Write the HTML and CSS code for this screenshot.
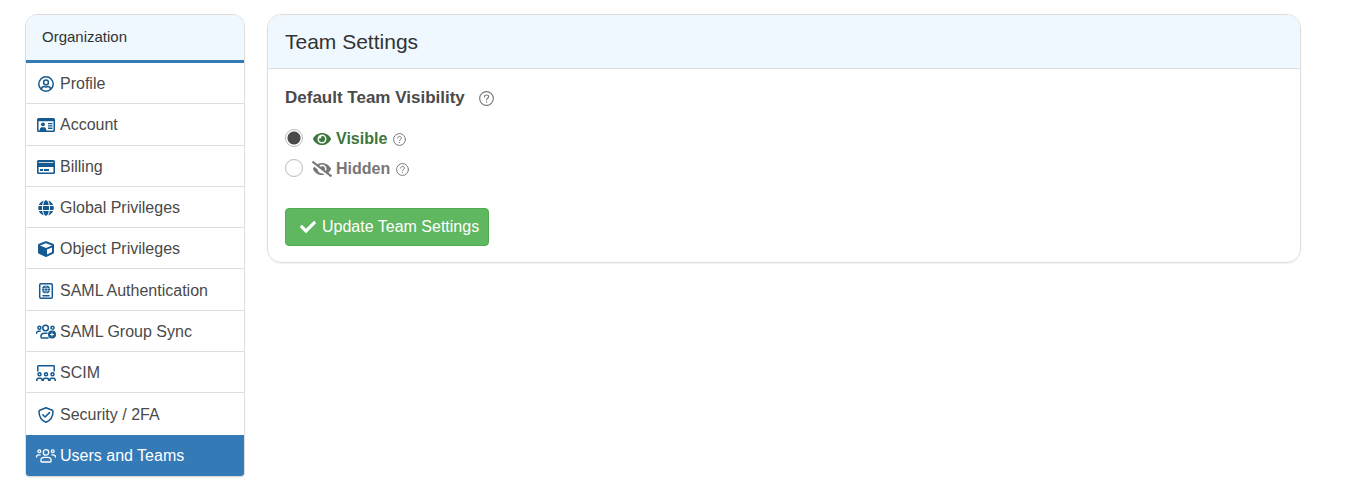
FILE: index.html
```
<!DOCTYPE html>
<html lang="en">
<head>
  <meta charset="UTF-8">
  <meta name="viewport" content="width=device-width, initial-scale=1.0">
  <title>Team Settings</title>
  <link rel="stylesheet" href="styles.css">
</head>
<body>

<div class="page">
  <nav class="sidebar" aria-labelledby="sidebar-title">
    <h2 class="sidebar-title" id="sidebar-title">Organization</h2>
    <ul class="menu">
      <li>
        <a href="#profile">
          <svg class="icon line" viewBox="0 0 20 16"><circle cx="10" cy="8" r="7.2"/><circle cx="10" cy="6.4" r="2.4"/><path d="M5.3 13.2c.4-1.9 1.6-2.6 2.9-2.6.6 0 1 .3 1.8.3s1.2-.3 1.8-.3c1.3 0 2.5.7 2.9 2.6"/></svg>
          Profile
        </a>
      </li>
      <li>
        <a href="#account">
          <svg class="icon" viewBox="0 0 20 16"><path fill-rule="evenodd" d="M2.6 1h14.8A1.6 1.6 0 0 1 19 2.600v10.800a1.600 1.600 0 0 1-1.600 1.600H2.600A1.600 1.600 0 0 1 1 13.400V2.600A1.600 1.600 0 0 1 2.600 1zM2.500 4.200v9.300h15V4.200z"/><circle cx="7" cy="7.300" r="1.900"/><path d="M3.500 14c0-2.500 1-3.800 2.400-3.800h2.200c1.400 0 2.400 1.300 2.400 3.800zM12 6h4.500v1.300H12zm0 2.300h4.500v1.300H12zm0 2.300h4.500v1.300H12z"/></svg>
          Account
        </a>
      </li>
      <li>
        <a href="#billing">
          <svg class="icon" viewBox="0 0 20 16"><path fill-rule="evenodd" d="M2.6 1h14.8A1.6 1.6 0 0 1 19 2.600v10.800a1.600 1.600 0 0 1-1.600 1.600H2.600A1.600 1.600 0 0 1 1 13.400V2.600A1.600 1.600 0 0 1 2.600 1zM2.600 3v.7h14.800V3zm0 5v5.500h14.800V8z"/><path d="M4 10h3v2H4zm4 0h5v2H8z"/></svg>
          Billing
        </a>
      </li>
      <li>
        <a href="#global-privileges">
          <svg class="icon" viewBox="-72 0 640 512"><path d="M336.500 160C322 70.700 287.800 8 248 8s-74 62.700-88.500 152h177zM152 256c0 22.200 1.200 43.500 3.300 64h185.300c2.100-20.500 3.300-41.800 3.300-64s-1.200-43.500-3.300-64H155.300c-2.100 20.500-3.300 41.800-3.300 64zm324.700-96c-28.600-67.900-86.500-120.400-158-141.600 24.400 33.800 41.200 84.700 50 141.600h108zM177.200 18.400C105.800 39.600 47.800 92.100 19.300 160h108c8.700-56.900 25.500-107.800 49.900-141.600zM487.400 192H372.700c2.100 21 3.300 42.500 3.300 64s-1.200 43-3.300 64h114.600c5.500-20.500 8.600-41.800 8.600-64s-3.100-43.500-8.500-64zM120 256c0-21.500 1.200-43 3.300-64H8.600C3.200 212.500 0 233.800 0 256s3.200 43.500 8.600 64h114.600c-2-21-3.200-42.500-3.200-64zm39.500 96c14.500 89.300 48.700 152 88.500 152s74-62.700 88.500-152h-177zm159.300 141.600c71.400-21.200 129.400-73.700 158-141.600h-108c-8.800 56.900-25.600 107.800-50 141.600zM19.300 352c28.600 67.900 86.500 120.400 158 141.600-24.400-33.800-41.200-84.700-50-141.600h-108z"/></svg>
          Global Privileges
        </a>
      </li>
      <li>
        <a href="#object-privileges">
          <svg class="icon" viewBox="0 0 20 16"><path fill-rule="evenodd" d="M9.400.3a1.700 1.700 0 0 1 1.200 0l6.400 2.400c.6.200 1 .8 1 1.400v7.300c0 .6-.3 1.100-.9 1.400l-6.400 3a1.600 1.600 0 0 1-1.400 0l-6.400-3a1.500 1.500 0 0 1-.9-1.400V4.100c0-.6.4-1.200 1-1.400zM10 2.200 4 4.400v.1L10 7l6-2.500v-.1zM11 13.500l5-2.400V6.600l-5 2z"/></svg>
          Object Privileges
        </a>
      </li>
      <li>
        <a href="#saml-authentication">
          <svg class="icon line" viewBox="0 0 20 16"><rect x="3.700" y=".8" width="12.600" height="14.400" rx="1.200"/><circle class="solid" cx="10" cy="6.600" r="4"/><path class="cut thin" d="M6 5.500h8M6 7.700h8M10 2.600c-2 2.400-2 5.600 0 8M10 2.600c2 2.400 2 5.600 0 8"/><path d="M7 12.800h6"/></svg>
          SAML Authentication
        </a>
      </li>
      <li>
        <a href="#saml-group-sync">
          <svg class="icon line" viewBox="0 0 20 16"><circle cx="3.400" cy="3.800" r="1.500"/><circle cx="9.600" cy="4" r="2.800"/><path d="M15.300 4.700a1.500 1.500 0 1 1 1.300.6M.6 9.300c0-1.300.7-2 1.900-2h1.700M11 9.200H8.300C6.200 9.200 5 10.300 5 12.100v1c0 .5.300.9.900.9H12"/><circle class="solid" cx="16" cy="10.500" r="4"/><path class="cut" d="M16 9v3M14.500 10.500h3"/></svg>
          SAML Group Sync
        </a>
      </li>
      <li>
        <a href="#scim">
          <svg class="icon line" viewBox="0 0 20 16"><path d="M1.800 6V1.500c0-.5.3-.8.8-.8h14.800c.5 0 .8.3.8.800V6"/><circle cx="3.500" cy="9.300" r="1.500"/><circle cx="10" cy="9.300" r="1.500"/><circle cx="16.500" cy="9.300" r="1.500"/><path d="M.7 15.700c0-1.600.8-2.500 2-2.500h1.600c1.200 0 2 .9 2 2.500M7.200 15.700c0-1.600.8-2.500 2-2.500h1.600c1.200 0 2 .9 2 2.500M13.700 15.700c0-1.600.8-2.500 2-2.500h1.600c1.200 0 2 .9 2 2.500"/></svg>
          SCIM
        </a>
      </li>
      <li>
        <a href="#security">
          <svg class="icon line" viewBox="0 0 20 16"><path d="M10 .8l6.200 2.500c.5.200.8.600.8 1.100 0 5-2.300 8.900-7 10.900-4.700-2-7-5.900-7-10.900 0-.5.300-.9.800-1.100z"/><path d="M6.800 7.700l2.300 2.300 4.400-4.400"/></svg>
          Security / 2FA
        </a>
      </li>
      <li>
        <a href="#users-and-teams" class="active" aria-current="page">
          <svg class="icon line" viewBox="0 0 20 16"><circle cx="3.300" cy="3.300" r="1.400"/><circle cx="16.700" cy="3.300" r="1.400"/><circle cx="10" cy="4.400" r="2.700"/><path d="M.6 9c0-1.400.8-2.100 2-2.100h1.600M19.400 9c0-1.400-.8-2.100-2-2.100h-1.600"/><path d="M8.200 9.400h3.600c2 0 3.300 1.200 3.300 3v.8c0 .5-.3.800-.8.800H5.700c-.5 0-.8-.3-.8-.8v-.8c0-1.800 1.300-3 3.300-3z"/></svg>
          Users and Teams
        </a>
      </li>
    </ul>
  </nav>

  <main class="panel">
    <h1 class="panel-title">Team Settings</h1>
    <form class="panel-body">
      <fieldset class="visibility">
        <legend>
          Default Team Visibility
          <svg class="help help-large" viewBox="0 0 16 16"><circle cx="8" cy="8" r="7.300"/><path d="M5.800 6.300c0-1.300.9-2.100 2.200-2.100s2.300.8 2.300 2c0 1.600-2.200 1.600-2.200 3.200"/><path d="M8.100 11.500v.4"/></svg>
        </legend>
        <div class="option option-visible">
          <input type="radio" name="visibility" id="visible" checked>
          <label for="visible">
            <svg class="eye" viewBox="-32 0 640 512"><path d="M572.520 241.400C518.290 135.590 410.930 64 288 64S57.680 135.640 3.480 241.410a32.350 32.350 0 0 0 0 29.190C57.710 376.410 165.070 448 288 448s230.320-71.640 284.520-177.410a32.350 32.350 0 0 0 0-29.190zM288 400a144 144 0 1 1 144-144 143.930 143.930 0 0 1-144 144zm0-240a95.310 95.310 0 0 0-25.310 3.790 47.850 47.850 0 0 1-66.900 66.900A95.780 95.780 0 1 0 288 160z"/></svg>
            Visible
          </label>
          <svg class="help" viewBox="0 0 16 16"><circle cx="8" cy="8" r="7.300"/><path d="M5.800 6.300c0-1.300.9-2.100 2.200-2.100s2.300.8 2.300 2c0 1.600-2.200 1.600-2.200 3.200"/><path d="M8.100 11.500v.4"/></svg>
        </div>
        <div class="option option-hidden">
          <input type="radio" name="visibility" id="hidden">
          <label for="hidden">
            <svg class="eye" viewBox="0 0 640 512"><path d="M320 400c-75.850 0-137.250-58.710-142.900-133.110L72.200 185.820c-13.790 17.300-26.480 35.590-36.720 55.590a32.350 32.350 0 0 0 0 29.190C89.710 376.410 197.070 448 320 448c26.910 0 52.870-4 77.890-10.460L346 397.390a144.130 144.130 0 0 1-26 2.610zm313.820 58.100l-110.550-85.440a331.250 331.250 0 0 0 81.250-102.070 32.350 32.350 0 0 0 0-29.190C550.290 135.590 442.930 64 320 64a308.150 308.150 0 0 0-147.320 37.700L45.460 3.370A16 16 0 0 0 23 6.180L3.370 31.450A16 16 0 0 0 6.180 53.900l588.360 454.730a16 16 0 0 0 22.460-2.810l19.640-25.270a16 16 0 0 0-2.820-22.450zm-183.720-142l-39.300-30.380A94.750 94.750 0 0 0 416 256a94.760 94.760 0 0 0-121.310-92.210A47.650 47.650 0 0 1 304 192a46.640 46.640 0 0 1-1.540 10l-73.610-56.890A142.310 142.310 0 0 1 320 112a143.920 143.920 0 0 1 144 144c0 21.630-5.290 41.790-13.900 60.110z"/></svg>
            Hidden
          </label>
          <svg class="help" viewBox="0 0 16 16"><circle cx="8" cy="8" r="7.300"/><path d="M5.800 6.300c0-1.300.9-2.100 2.200-2.100s2.300.8 2.300 2c0 1.600-2.200 1.600-2.200 3.200"/><path d="M8.100 11.500v.4"/></svg>
        </div>
      </fieldset>
      <button type="button" class="btn">
        <svg class="check" viewBox="0 0 512 512"><path d="M173.898 439.404l-166.400-166.400c-9.997-9.997-9.997-26.206 0-36.204l36.203-36.204c9.997-9.998 26.207-9.998 36.204 0L192 312.690 432.095 72.596c9.997-9.997 26.207-9.997 36.204 0l36.203 36.204c9.997 9.997 9.997 26.206 0 36.204l-294.400 294.401c-9.998 9.997-26.207 9.997-36.204-.001z"/></svg>
        Update Team Settings
      </button>
    </form>
  </main>
</div>

</body>
</html>
```
FILE: styles.css
```
* {
  box-sizing: border-box;
}
body {
  margin: 0;
  background-color: #fff;
  color: #4a4a4a;
  font-family: "Helvetica Neue", Helvetica, "Liberation Sans", Arial, sans-serif;
  font-size: 16px;
  line-height: 24px;
}
.page {
  display: flex;
  align-items: flex-start;
  gap: 22px;
  padding: 14px 45px 12px 25px;
}

/* Sidebar */
.sidebar {
  flex: 0 0 220px;
  border: 1px solid #ddd;
  border-radius: 12px 12px 4px 4px;
  box-shadow: 0 1px 1px rgba(0,0,0,0.05);
  overflow: hidden;
}
.sidebar-title {
  margin: 0;
  padding: 10px 16px 11px;
  background-color: #eff7ff;
  border-bottom: 3px solid #337ab7;
  color: #333;
  font-size: 15px;
  font-weight: normal;
}
.menu {
  display: grid;
  grid-auto-rows: 1fr;
  min-height: 413px;
  margin: 0;
  padding: 0;
  list-style: none;
}
.menu li {
  display: flex;
  border-bottom: 1px solid #ddd;
}
.menu li:nth-last-child(-n+2) {
  border-bottom: 0;
}
.menu a {
  flex: 1;
  display: flex;
  align-items: center;
  gap: 4px;
  padding: 9px 10px 7px;
  color: #4a4a4a;
  text-decoration: none;
}
.menu a.active {
  background-color: #337ab7;
  color: #fff;
}
.icon {
  width: 20px;
  height: 16px;
  fill: #14598f;
}
.icon.line {
  fill: none;
  stroke: #14598f;
  stroke-width: 1.5;
  stroke-linecap: round;
  stroke-linejoin: round;
}
.icon .solid {
  fill: #14598f;
  stroke: none;
}
.icon .cut {
  stroke: #fff;
  stroke-width: 1;
}
.icon .thin {
  stroke-width: 0.5;
}
.active .icon.line {
  stroke: #fff;
  stroke-width: 1.3;
}

/* Settings panel */
.panel {
  flex: 1;
  min-width: 0;
  border: 1px solid #ddd;
  border-radius: 14px;
  box-shadow: 0 1px 1px rgba(0,0,0,0.05);
  overflow: hidden;
}
.panel-title {
  margin: 0;
  padding: 15px 17px 14px;
  background-color: #eff7ff;
  border-bottom: 1px solid #ddd;
  color: #333;
  font-size: 21px;
  font-weight: normal;
}
.panel-body {
  padding: 17px 17px 16px;
}
.visibility {
  min-width: 0;
  margin: 0 0 24px;
  padding: 0;
  border: 0;
}
.visibility legend {
  display: flex;
  align-items: center;
  gap: 14px;
  margin-bottom: 14px;
  padding: 0;
  font-size: 17px;
  font-weight: bold;
}
.option {
  display: flex;
  align-items: center;
  height: 30px;
}
.option input {
  appearance: none;
  width: 18px;
  height: 18px;
  margin: 0 9px 3px 0;
  border: 1px solid #bbb;
  border-radius: 50%;
  background-color: #fff;
}
.option input:checked {
  background: radial-gradient(circle, #4a4a4a 6px, #fff 7px);
}
.option label {
  display: flex;
  align-items: center;
  gap: 4px;
  font-weight: bold;
}
.option-visible label {
  color: #3c763d;
}
.option-hidden label {
  color: #777;
}
.eye {
  width: 20px;
  height: 16px;
  fill: currentColor;
}
.help {
  width: 13px;
  height: 13px;
  margin-left: 6px;
  fill: none;
  stroke: #777;
  stroke-width: 1.2;
  stroke-linecap: round;
}
.help-large {
  width: 15px;
  height: 15px;
  margin-left: 0;
}
.btn {
  display: flex;
  align-items: center;
  gap: 6px;
  padding: 6px 9px 6px 14px;
  border: 1px solid #4cae4c;
  border-radius: 4px;
  background-color: #5fb760;
  color: #fff;
  font: inherit;
  cursor: pointer;
}
.check {
  width: 16px;
  height: 16px;
  fill: #fff;
}
```
